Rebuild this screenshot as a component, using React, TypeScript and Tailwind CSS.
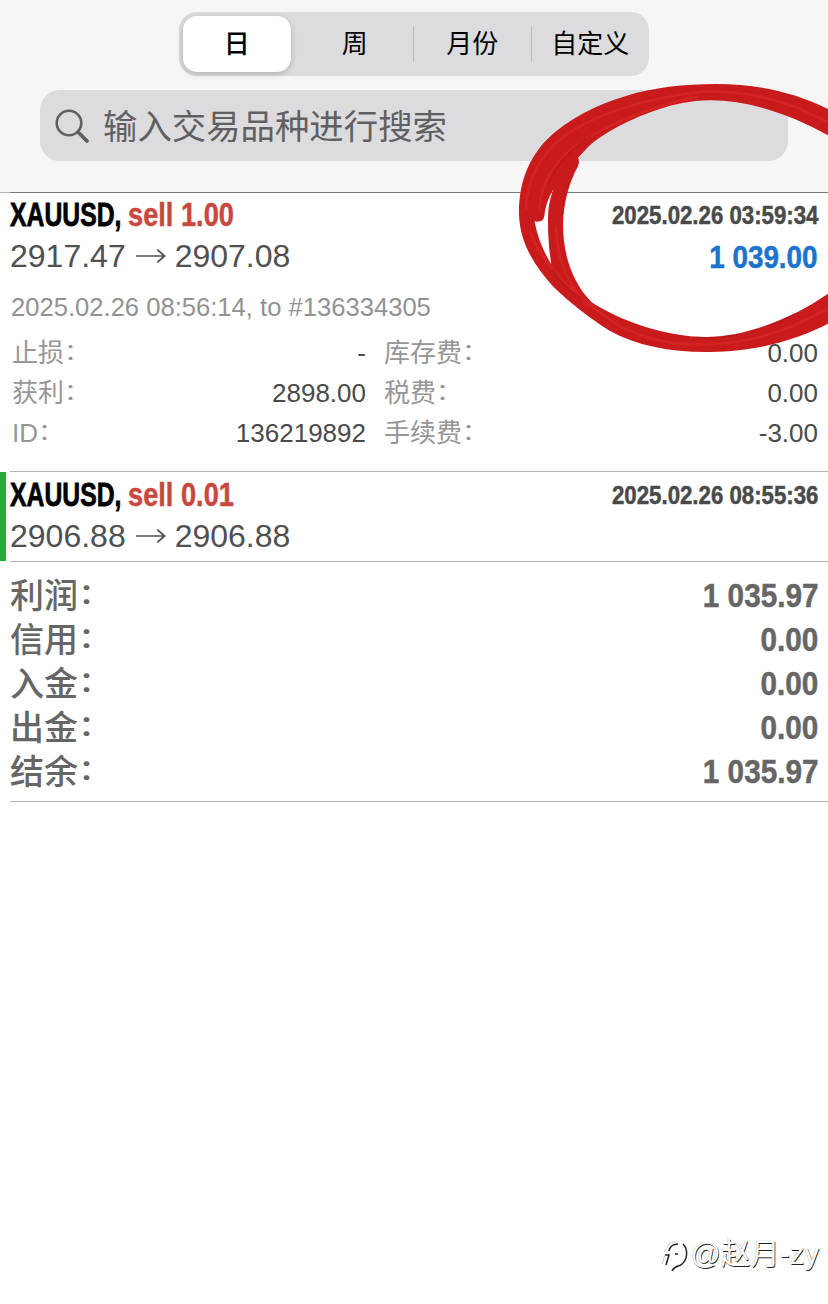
import clsx from "clsx";

const tabs = ["日", "周", "月份", "自定义"];

const details = [
  ["止损", "-", "库存费", "0.00"],
  ["获利", "2898.00", "税费", "0.00"],
  ["ID", "136219892", "手续费", "-3.00"],
];

const totals = [
  ["利润", "1 035.97"],
  ["信用", "0.00"],
  ["入金", "0.00"],
  ["出金", "0.00"],
  ["结余", "1 035.97"],
];

function Label({ text }: { text: string }) {
  return (
    <span>
      {text}
      <span className="inline-block -translate-y-[0.05em] scale-y-[0.82]">：</span>
    </span>
  );
}

function Arrow() {
  return (
    <svg className="mx-[9px] h-4 w-[31px]" viewBox="0 0 32 16" fill="none" stroke="#505050" strokeWidth="1.8">
      <path d="M1 8H30M23 1.5L30.5 8L23 14.5" />
    </svg>
  );
}

type TradeProps = {
  side: string;
  time: string;
  open: string;
  close: string;
  profit?: string;
};

function Trade({ side, time, open, close, profit }: TradeProps) {
  return (
    <>
      <div className="flex h-10 items-center justify-between font-bold [-webkit-text-stroke:0.5px_currentColor]">
        <div className="flex items-center text-[33px]">
          <span className="w-[118px] origin-left scale-x-[0.75] whitespace-nowrap text-black [-webkit-text-stroke:0.8px_currentColor]">
            XAUUSD,
          </span>
          <span className="origin-left scale-x-[0.825] whitespace-nowrap text-[#c9483d]">{side}</span>
        </div>
        <span className="origin-right scale-x-[0.855] whitespace-nowrap text-[26px] text-[#4a4a4a]">{time}</span>
      </div>
      <div className="flex h-[42px] items-center justify-between text-[32px] text-[#505050]">
        <div className="flex items-center">
          <span>{open}</span>
          <Arrow />
          <span>{close}</span>
        </div>
        {profit && (
          <span className="origin-right translate-y-px scale-x-[0.87] font-bold text-[#1a74ce] [-webkit-text-stroke:0.5px_currentColor]">
            {profit}
          </span>
        )}
      </div>
    </>
  );
}

function Marker() {
  return (
    <svg
      className="pointer-events-none absolute top-[75px] right-0 h-[290px] w-[318px]"
      viewBox="0 0 954 870"
      fill="none"
      strokeLinecap="round"
      strokeLinejoin="round"
    >
      <path
        fill="#c91a1c"
        fillRule="evenodd"
        d="M27 420C26 330 50 265 100 205C160 140 250 92 350 62C430 38 520 27 620 27C740 27 860 52 970 110V190C850 120 720 76 600 76C540 77 490 88 440 105C370 128 285 170 235 215L204 248C208 256 208 264 203 275C178 320 160 385 159 450C160 530 180 615 245 682C330 738 470 787 590 786C720 785 860 725 970 645V738C880 785 760 830 600 831C480 832 380 812 300 768C240 730 180 683 130 635C75 575 30 505 27 420Z
           M131 342C118 375 114 400 114 440C114 490 118 530 124 568C104 535 82 490 74 438C84 443 100 440 103 424C106 395 114 370 131 342Z"
      />
      <path
        stroke="#dc2a28"
        strokeWidth="8"
        opacity="0.6"
        d="M48 400C52 310 90 240 160 185C250 120 400 70 580 50C740 45 860 90 970 150M88 400C92 330 130 260 200 210C300 145 420 95 560 66M60 470C100 580 220 685 340 760C430 800 500 810 590 808C740 806 860 755 970 690M138 460C142 560 175 625 230 690"
      />
      <path stroke="#ad1517" strokeWidth="5" opacity="0.5" d="M116 325C140 270 180 220 240 185M128 585C150 620 180 650 220 675M560 787C640 796 760 765 860 715" />
    </svg>
  );
}

function Watermark() {
  return (
    <div className="absolute right-[9px] bottom-[30px] flex items-center text-[29.5px] leading-[40px] text-white [text-shadow:0.8px_0.8px_0.6px_#222,-0.5px_-0.5px_0.5px_#bbb]">
      <svg className="mr-[2px] h-9 w-7" viewBox="0 0 28 36" fill="none" strokeWidth="1.5">
        <path stroke="#222" d="M5 29L8 19H4M8 15C9 10 12 8 17 8M14 18H17M22 8C27 13 27 23 21 28C18 31 14 29 11 35" />
        <path stroke="#ccc" strokeWidth="1" d="M1 28L4 19M3 16L6 12C7 8 10 5 15 6" />
      </svg>
      <span className="whitespace-nowrap">@赵月-zy</span>
    </div>
  );
}

export default function App() {
  return (
    <main className="relative h-[1304px] w-[828px] overflow-hidden bg-white font-['Liberation_Sans','Noto_Sans_CJK_SC',sans-serif]">
      <header className="h-[192px] bg-[#f6f6f6] pt-3">
        <div className="mx-auto flex h-16 w-[470px] rounded-[18px] bg-[#dcdcde]">
          {tabs.map((tab, idx) => (
            <div key={tab} className="flex flex-1 items-center">
              <div
                className={clsx(
                  "flex grow items-center justify-center text-[26px] text-black",
                  idx === 0 && "mr-[6px] ml-1 h-14 rounded-[14px] bg-white font-medium shadow-[0_2px_6px_rgba(0,0,0,0.2)]"
                )}
              >
                {tab}
              </div>
              {(idx === 1 || idx === 2) && <div className="h-9 w-px bg-[#b9b9bb]" />}
            </div>
          ))}
        </div>
        <div className="mt-[14px] mr-10 ml-10 flex h-[71px] items-center rounded-[20px] bg-[#dcdcde] pl-[15px] text-[#606063]">
          <svg className="h-9 w-9" viewBox="0 0 36 36" fill="none" stroke="currentColor">
            <circle cx="14" cy="15" r="12.3" strokeWidth="2.6" />
            <path d="M23 24L32 33" strokeWidth="3.8" strokeLinecap="round" />
          </svg>
          <span className="mt-[3px] ml-3 text-[34.4px] leading-none">输入交易品种进行搜索</span>
        </div>
      </header>

      <div className="flex">
        <div className="h-px w-2.5 bg-[#b4b4b4]" />
        <section className="h-[279px] grow border-t border-[#777] pt-0.5 pr-2.5">
          <Trade side="sell 1.00" time="2025.02.26 03:59:34" open="2917.47" close="2907.08" profit="1 039.00" />
          <p className="mt-2.5 mb-1.5 ml-px h-10 text-[25.6px] leading-10 text-[#929292]">
            2025.02.26 08:56:14, to #136334305
          </p>
          {details.map(([name, value, fee, amount]) => (
            <div key={name} className="flex h-10 items-center text-[26px] text-[#4a4a4a]">
              <div className="ml-0.5 flex w-[354px] justify-between">
                <span className="text-[#969696]">
                  <Label text={name} />
                </span>
                <span>{value}</span>
              </div>
              <div className="ml-[18px] flex grow justify-between">
                <span className="text-[#969696]">
                  <Label text={fee} />
                </span>
                <span>{amount}</span>
              </div>
            </div>
          ))}
        </section>
      </div>

      <div className="flex h-[90px]">
        <div className="mt-px w-1.5 bg-[#21ad3a]" />
        <section className="ml-1 grow border-t border-[#b4b4b4] pt-[3px] pr-2.5">
          <Trade side="sell 0.01" time="2025.02.26 08:55:36" open="2906.88" close="2906.88" />
        </section>
      </div>

      <section className="ml-2.5 h-[241px] border-y border-[#b4b4b4] pt-3 pr-2.5">
        {totals.map(([name, value]) => (
          <div key={name} className="flex h-11 items-center justify-between text-[#666]">
            <span className="text-[34px] font-medium">
              <Label text={name} />
            </span>
            <span className="origin-right scale-x-[0.9] text-[33px] font-bold [-webkit-text-stroke:0.5px_currentColor]">
              {value}
            </span>
          </div>
        ))}
      </section>

      <Marker />
      <Watermark />
    </main>
  );
}
